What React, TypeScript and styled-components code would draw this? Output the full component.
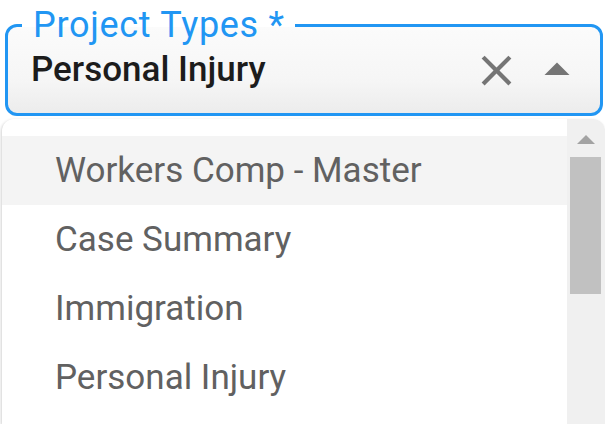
import React from 'react';
import styled, { createGlobalStyle } from 'styled-components';

const options = ['Workers Comp - Master', 'Case Summary', 'Immigration', 'Personal Injury'];

const GlobalStyle = createGlobalStyle`
  html, body {
    margin: 0;
    padding: 0;
    background: #ffffff;
    font-family: Roboto, "Liberation Sans", sans-serif;
    overflow: hidden;
  }
`;

const App: React.FC = () => {
  const highlighted = 0;

  return (
    <Page>
      <GlobalStyle />
      <Field>
        <Label>Project Types *</Label>
        <InputRow>
          <Value>Personal Injury</Value>
          <IconButton aria-label="Clear">
            <svg width="51" height="51" viewBox="0 0 24 24">
              <path
                fill="#757575"
                d="M19 6.41L17.59 5 12 10.59 6.41 5 5 6.41 10.59 12 5 17.59 6.41 19 12 13.41 17.59 19 19 17.59 13.41 12z"
              />
            </svg>
          </IconButton>
          <IconButton aria-label="Close">
            <svg width="60" height="60" viewBox="0 0 24 24">
              <path fill="#757575" d="M7 14l5-5 5 5z" />
            </svg>
          </IconButton>
        </InputRow>
      </Field>

      <Popup>
        <OptionList>
          {options.map((option, index) => (
            <OptionRow key={option} $active={index === highlighted}>
              {option}
            </OptionRow>
          ))}
        </OptionList>
        <ScrollTrack>
          <ScrollArrow>
            <svg width="18" height="9" viewBox="0 0 18 9">
              <path fill="#a3a3a3" d="M0 9L9 0 18 9z" />
            </svg>
          </ScrollArrow>
          <ScrollThumb />
        </ScrollTrack>
      </Popup>
    </Page>
  );
};

// Styled Components
const Page = styled.div`
  display: flex;
  flex-direction: column;
  width: 605px;
  height: 424px;
  padding-top: 8px;
  box-sizing: border-box;
  overflow: hidden;
`;

const Field = styled.fieldset`
  margin: 0 2px 0 5px;
  padding: 0;
  min-width: 0;
  border: 3px solid #2196f3;
  border-radius: 12px;
  background: linear-gradient(to bottom, #fbfbfb 0%, #f6f6f6 60%, #ececec 100%);
`;

const Label = styled.legend`
  margin-left: 14px;
  padding: 0 10px 0 11px;
  font-size: 36px;
  line-height: 34px;
  font-weight: 400;
  letter-spacing: 0.7px;
  color: #2196f3;
`;

const InputRow = styled.div`
  display: flex;
  align-items: center;
  height: 56px;
  padding: 0 13px 15px 23px;
`;

const Value = styled.div`
  flex: 1;
  font-size: 35px;
  line-height: 58px;
  font-weight: 500;
  color: #1c1c1c;
  white-space: nowrap;
`;

const IconButton = styled.span`
  display: flex;
  align-items: center;
  justify-content: center;
  margin-left: 5px;
`;

const Popup = styled.div`
  display: flex;
  margin: 3px 0 0 2px;
  flex: 1;
  background: #ffffff;
  border-radius: 12px 12px 0 0;
  box-shadow: -1px 1px 3px rgba(0, 0, 0, 0.18);
  overflow: hidden;
`;

const OptionList = styled.div`
  flex: 1;
  padding-top: 17px;
`;

const OptionRow = styled.div<{ $active: boolean }>`
  height: 69px;
  padding-left: 53px;
  font-size: 35px;
  line-height: 69px;
  font-weight: 400;
  color: #616161;
  white-space: nowrap;
  background-color: ${({ $active }) => ($active ? '#f4f4f4' : 'transparent')};
`;

const ScrollTrack = styled.div`
  display: flex;
  flex-direction: column;
  width: 38px;
  background: #f0f0f0;
  padding: 0 4px 0 3px;
  box-sizing: border-box;
`;

const ScrollArrow = styled.div`
  display: flex;
  align-items: center;
  justify-content: center;
  height: 38px;
  padding-top: 2px;
  box-sizing: border-box;
`;

const ScrollThumb = styled.div`
  height: 137px;
  background: #c1c1c1;
`;

export default App;
